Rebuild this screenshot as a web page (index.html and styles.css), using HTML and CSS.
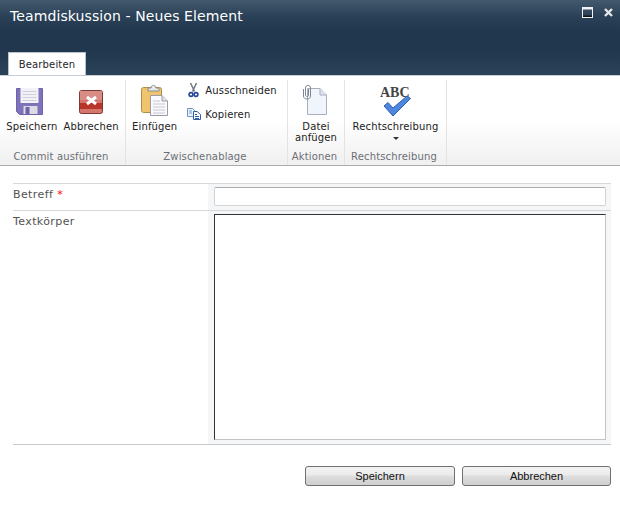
FILE: index.html
```html
<!DOCTYPE html>
<html lang="de">
<head>
    <meta charset="UTF-8">
    <title>Teamdiskussion - Neues Element</title>
    <link rel="stylesheet" href="styles.css">
</head>
<body>
    <header class="titlebar">
        <div class="title-row">
            <h1 class="title">Teamdiskussion - Neues Element</h1>
            <div class="window-icons">
                <svg width="11" height="11" viewBox="0 0 11 11"><rect x="0.5" y="0.5" width="10" height="10" fill="none" stroke="#f2f2f2"/><rect x="1" y="1" width="9" height="1.5" fill="#f2f2f2"/><rect x="1" y="8.5" width="9" height="1.5" fill="#111"/></svg>
                <svg width="11" height="11" viewBox="0 0 11 11"><path d="M2 2L9 9M9 2L2 9" stroke="#e6e6e6" stroke-width="2.4"/></svg>
            </div>
        </div>
        <div class="tab">Bearbeiten</div>
    </header>

    <section class="ribbon">
        <div class="group group-commit">
            <div class="group-body">
                <div class="big-btn">
                    <svg class="big-icon" width="32" height="32" viewBox="0 0 32 32">
                        <path d="M0.5 4.5H26.5V30.5H3.5L0.5 27.5Z" fill="#8071bb" stroke="#7062ad"/>
                        <rect x="4.5" y="4" width="18" height="15" fill="#f3f3f7"/>
                        <path d="M6.5 7.5H20.5M6.5 10.5H20.5M6.5 13.5H20.5M6.5 16.5H20.5" stroke="#cfcfdb"/>
                        <rect x="7.5" y="22" width="14" height="8" fill="#dcdce4"/>
                        <rect x="9.5" y="23" width="4" height="7" fill="#6f61ac"/>
                    </svg>
                    <span>Speichern</span>
                </div>
                <div class="big-btn">
                    <svg class="big-icon" width="32" height="32" viewBox="0 0 32 32">
                        <rect x="4.5" y="6.5" width="23" height="23" rx="2" fill="#d5776c" stroke="#7d3a34"/>
                        <rect x="5" y="7" width="22" height="9" fill="#d88d84"/>
                        <rect x="5" y="19" width="22" height="6" fill="#b8352a"/>
                        <path d="M12 13L21 20M21 13L12 20" stroke="#fff" stroke-width="3"/>
                    </svg>
                    <span>Abbrechen</span>
                </div>
            </div>
            <div class="group-label">Commit ausführen</div>
        </div>

        <div class="group group-clipboard">
            <div class="group-body">
                <div class="big-btn">
                    <svg class="big-icon" width="32" height="32" viewBox="0 0 32 32">
                        <rect x="2.5" y="3.5" width="20" height="25" rx="2" fill="#f0c36d" stroke="#b08d4f"/>
                        <path d="M9 4H12C12 0.5 17 0.5 17 4H20V7H9Z" fill="#e8e8e8" stroke="#8c8c8c"/>
                        <path d="M11.5 11.5H23L28.5 17V31.5H11.5Z" fill="#fafafc" stroke="#9a9aa8"/>
                        <path d="M23 11.5V17H28.5" fill="#dfe3ea" stroke="#9a9aa8"/>
                        <path d="M14 17H21M14 20H26M14 23H26M14 26H26M14 29H26" stroke="#c4c8d2"/>
                    </svg>
                    <span>Einfügen</span>
                </div>
                <div class="small-list">
                    <div class="small-btn">
                        <svg width="16" height="16" viewBox="0 0 16 16">
                            <path d="M5.5 1L9.5 9.5M11.5 1L7.5 9.5" stroke="#6f7580" stroke-width="1.5"/>
                            <circle cx="6" cy="12.5" r="1.9" fill="none" stroke="#27459b" stroke-width="1.6"/>
                            <circle cx="11" cy="12.5" r="1.9" fill="none" stroke="#27459b" stroke-width="1.6"/>
                        </svg>
                        <span>Ausschneiden</span>
                    </div>
                    <div class="small-btn">
                        <svg width="16" height="16" viewBox="0 0 16 16">
                            <path d="M2.5 2.5H7.5L9.5 4.5V10.5H2.5Z" fill="#eef3fb" stroke="#6d93cb"/>
                            <path d="M8.5 5.5H12L15.5 8.5V13.5H8.5Z" fill="#fff" stroke="#2f5da6"/>
                            <path d="M10 8.5H12M10 10.5H14M10 12.5H14" stroke="#2f5da6"/>
                            <path d="M4 5H7M4 7H7" stroke="#6d93cb"/>
                        </svg>
                        <span>Kopieren</span>
                    </div>
                </div>
            </div>
            <div class="group-label">Zwischenablage</div>
        </div>

        <div class="group group-actions">
            <div class="group-body">
                <div class="big-btn">
                    <svg class="big-icon" width="32" height="32" viewBox="0 0 32 32">
                        <path d="M7.5 4.5H20L26.5 11V30.5H7.5Z" fill="#f0f4fb" stroke="#a9afbc"/>
                        <path d="M20 4.5V11H26.5" fill="#dfe4ee" stroke="#a9afbc"/>
                        <path d="M3.5 5V12C3.5 16 10.5 16 10.5 12V4C10.5 0.5 5.5 0.5 5.5 4V11C5.5 13 8.5 13 8.5 11V5" fill="none" stroke="#7d8696"/>
                    </svg>
                    <span>Datei<br>anfügen</span>
                </div>
            </div>
            <div class="group-label">Aktionen</div>
        </div>

        <div class="group group-spelling">
            <div class="group-body">
                <div class="big-btn">
                    <svg class="big-icon" width="32" height="32" viewBox="0 0 32 32">
                        <text x="0" y="13" class="abc">ABC</text>
                        <path d="M4 22L8 18.500L13 24L27 12L30.500 14.500L13 32Z" fill="#4d86dc" stroke="#2d5fae"/>
                    </svg>
                    <span>Rechtschreibung</span>
                    <i class="caret"></i>
                </div>
            </div>
            <div class="group-label">Rechtschreibung</div>
        </div>
    </section>

    <main class="form">
        <div class="form-row row-subject">
            <div class="form-label">Betreff <em>*</em></div>
            <div class="form-field"><div class="input"></div></div>
        </div>
        <div class="form-row row-body">
            <div class="form-label">Textkörper</div>
            <div class="form-field"><div class="textarea"></div></div>
        </div>
        <div class="form-buttons">
            <button class="btn">Speichern</button>
            <button class="btn btn-last">Abbrechen</button>
        </div>
    </main>
</body>
</html>
```
FILE: styles.css
```css
html, body {
    margin: 0;
    padding: 0;
}
body {
    width: 620px;
    height: 527px;
    overflow: hidden;
    background: #fff;
    font-family: "DejaVu Sans", Verdana, sans-serif;
    font-size: 10px;
    color: #222;
}
.titlebar {
    height: 75px;
    box-sizing: border-box;
    padding: 0 6px 0 8px;
    display: flex;
    flex-direction: column;
    justify-content: space-between;
    background: linear-gradient(#44596e 0, #2a4157 16px, #21374d 32px, #21374d 52px, #2b4359 75px);
}
.title-row {
    display: flex;
    justify-content: space-between;
    padding-top: 7px;
}
.title {
    margin: 0 0 0 2px;
    font-size: 14px;
    font-weight: normal;
    letter-spacing: 0.1px;
    line-height: 18px;
    color: #fff;
}
.window-icons {
    display: flex;
    gap: 10px;
    height: 11px;
}
.tab {
    width: 78px;
    height: 23px;
    box-sizing: border-box;
    border: 1px solid #b9c2cb;
    border-bottom: none;
    background: #fff;
    text-align: center;
    letter-spacing: 0.15px;
    line-height: 24px;
    color: #23262b;
}
.ribbon {
    height: 91px;
    box-sizing: border-box;
    padding-top: 4px;
    display: flex;
    border-top: 1px solid #c6ccd3;
    border-bottom: 1px solid #a9abad;
    background: linear-gradient(#fff 0, #fff 45px, #f1f1f1 85px);
    letter-spacing: 0.15px;
}
.group {
    display: flex;
    flex-direction: column;
    box-sizing: border-box;
    height: 85px;
    border-right: 1px solid #e3e3e3;
}
.group-commit { width: 126px; }
.group-clipboard { width: 162px; }
.group-actions { width: 57px; }
.group-spelling { width: 102px; }
.group-body {
    flex: 1;
    display: flex;
    justify-content: center;
}
.group-clipboard .group-body {
    justify-content: flex-start;
    padding-left: 3px;
}
.group-label {
    height: 17px;
    padding-right: 3px;
    line-height: 18px;
    text-align: center;
    color: #6b6f75;
}
.big-btn {
    display: flex;
    flex-direction: column;
    align-items: center;
    padding: 4px 3px 0;
    line-height: 11px;
    text-align: center;
}
.big-icon {
    margin-bottom: 5px;
}
.small-list {
    display: flex;
    flex-direction: column;
    gap: 8px;
    padding: 2px 0 0 5px;
}
.small-btn {
    display: flex;
    align-items: center;
    gap: 4px;
}
.caret {
    margin-top: 5px;
    border: 3px solid transparent;
    border-top-color: #333;
    border-bottom: none;
}
.abc {
    font-family: "Liberation Serif", serif;
    font-size: 14px;
    font-weight: bold;
    letter-spacing: 0;
    fill: #444;
}
.form {
    padding: 17px 9px 0 13px;
}
.form-row {
    display: flex;
    border-top: 1px solid #d8d8d8;
}
.row-subject { height: 26px; }
.row-body { height: 233px; border-bottom: 1px solid #c8c8c8; }
.form-label {
    width: 195px;
    padding-top: 4px;
    font-size: 11px;
    letter-spacing: 0.4px;
    line-height: 14px;
    color: #525252;
}
.form-label em {
    font-style: normal;
    color: #f00;
}
.form-field {
    flex: 1;
    padding: 3px 5px 0 6px;
    background: #f5f6f7;
}
.input {
    height: 19px;
    box-sizing: border-box;
    border: 1px solid #d4d4d4;
    border-top-color: #adadad;
    border-radius: 2px;
    background: #fff;
}
.textarea {
    height: 226px;
    box-sizing: border-box;
    border: 1px solid #333;
    border-right-color: #c4c4c4;
    border-bottom-color: #c4c4c4;
    background: #fff;
}
.form-buttons {
    display: flex;
    justify-content: flex-end;
    gap: 7px;
    padding-top: 21px;
}
.btn {
    width: 150px;
    height: 20px;
    padding: 0;
    border: 1px solid #707070;
    border-radius: 3px;
    background: linear-gradient(#f2f2f2 0, #ebebeb 45%, #dddddd 50%, #cfcfcf 100%);
    font-family: "Liberation Sans", Tahoma, sans-serif;
    font-size: 11px;
    color: #111;
}
.btn-last {
    width: 149px;
}
```
